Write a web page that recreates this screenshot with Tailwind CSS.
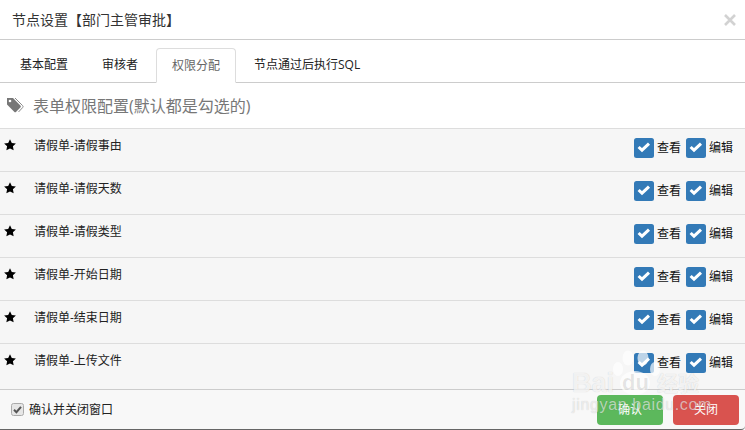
<!DOCTYPE html>
<html lang="zh"><head><meta charset="utf-8">
<script src="https://cdn.jsdelivr.net/npm/@tailwindcss/browser@4"></script>
</head>
<body class="w-[745px] h-[430px] overflow-hidden bg-white font-['Open_Sans','Noto_Sans_CJK_SC',sans-serif] text-[12px] text-[#333]">
<div class="relative w-[745px] h-[430px] flex flex-col">
  <header class="h-[40px] shrink-0 border-b border-[#ccc] flex items-center justify-between pl-[12px] pr-[9px]">
    <span class="text-[14px] leading-[20px] text-[#333]">节点设置【部门主管审批】</span>
    <svg width="12" height="12" viewBox="0 0 12 12"><path d="M1 1 L11 11 M11 1 L1 11" stroke="#d2d2d2" stroke-width="2.6"/></svg>
  </header>
  <nav class="h-[43px] shrink-0 border-b border-[#ccc] flex items-end pl-[5px] text-[12px] leading-[18px]">
    <span class="h-[34px] px-[15px] flex items-center text-[#222]">基本配置</span>
    <span class="h-[34px] pl-[19px] pr-[17px] flex items-center text-[#222]">审核者</span>
    <span class="h-[35px] w-[80px] mb-[-1px] ml-[1px] border border-[#ddd] border-b-white bg-white rounded-t-[4px] flex items-center justify-center text-[#666]">权限分配</span>
    <span class="h-[34px] px-[18px] flex items-center text-[#222]">节点通过后执行SQL</span>
  </nav>
  <h2 class="h-[45px] shrink-0 flex items-center pl-[6px] gap-[9px] text-[16px] text-[#777] font-normal">
    <svg width="18" height="17" viewBox="0 0 18 17"><path fill="none" stroke="#8a8a8a" stroke-width="1" d="M9 1l7.6 7.6a1.4 1.4 0 0 1 0 2L12.5 15"/><path fill="#777" d="M1 1h6L14.4 8.6a1.4 1.4 0 0 1 0 2l-4.2 4.2a1.4 1.4 0 0 1-2 0L1 7.4z"/><circle cx="4" cy="4" r="1.3" fill="#fff"/></svg>
    <span>表单权限配置(默认都是勾选的)</span>
  </h2>
  <ul class="flex-1 min-h-0 overflow-hidden bg-[#f6f6f6]">
    <li class="h-[43px] border-t border-[#ddd] flex items-start pl-[4px] pr-[12px] text-[#222]">
      <svg width="12" height="12" viewBox="0 0 24 24" class="mt-[10px]"><path fill="#000" d="M12 .5l3.6 7.4 8.2 1.1-6 5.6 1.5 8.1L12 18.8l-7.3 3.9 1.5-8.1-6-5.6 8.2-1.1z"/></svg>
      <span class="ml-[18px] mt-[8px] leading-[18px]">请假单-请假事由</span>
      <span class="ml-auto mt-[9px] flex items-center text-[#111]">
        <svg width="20" height="20" viewBox="0 0 20 20"><rect width="20" height="20" rx="2.5" fill="#337ab7"/><path d="M4.6 9l3.4 3.2L15 5.6" fill="none" stroke="#fff" stroke-width="3"/></svg><span class="ml-[3px] mr-[5px]">查看</span>
        <svg width="20" height="20" viewBox="0 0 20 20"><rect width="20" height="20" rx="2.5" fill="#337ab7"/><path d="M4.6 9l3.4 3.2L15 5.6" fill="none" stroke="#fff" stroke-width="3"/></svg><span class="ml-[3px]">编辑</span>
      </span>
    </li>
    <li class="h-[43px] border-t border-[#ddd] flex items-start pl-[4px] pr-[12px] text-[#222]">
      <svg width="12" height="12" viewBox="0 0 24 24" class="mt-[10px]"><path fill="#000" d="M12 .5l3.6 7.4 8.2 1.1-6 5.6 1.5 8.1L12 18.8l-7.3 3.9 1.5-8.1-6-5.6 8.2-1.1z"/></svg>
      <span class="ml-[18px] mt-[8px] leading-[18px]">请假单-请假天数</span>
      <span class="ml-auto mt-[9px] flex items-center text-[#111]">
        <svg width="20" height="20" viewBox="0 0 20 20"><rect width="20" height="20" rx="2.5" fill="#337ab7"/><path d="M4.6 9l3.4 3.2L15 5.6" fill="none" stroke="#fff" stroke-width="3"/></svg><span class="ml-[3px] mr-[5px]">查看</span>
        <svg width="20" height="20" viewBox="0 0 20 20"><rect width="20" height="20" rx="2.5" fill="#337ab7"/><path d="M4.6 9l3.4 3.2L15 5.6" fill="none" stroke="#fff" stroke-width="3"/></svg><span class="ml-[3px]">编辑</span>
      </span>
    </li>
    <li class="h-[43px] border-t border-[#ddd] flex items-start pl-[4px] pr-[12px] text-[#222]">
      <svg width="12" height="12" viewBox="0 0 24 24" class="mt-[10px]"><path fill="#000" d="M12 .5l3.6 7.4 8.2 1.1-6 5.6 1.5 8.1L12 18.8l-7.3 3.9 1.5-8.1-6-5.6 8.2-1.1z"/></svg>
      <span class="ml-[18px] mt-[8px] leading-[18px]">请假单-请假类型</span>
      <span class="ml-auto mt-[9px] flex items-center text-[#111]">
        <svg width="20" height="20" viewBox="0 0 20 20"><rect width="20" height="20" rx="2.5" fill="#337ab7"/><path d="M4.6 9l3.4 3.2L15 5.6" fill="none" stroke="#fff" stroke-width="3"/></svg><span class="ml-[3px] mr-[5px]">查看</span>
        <svg width="20" height="20" viewBox="0 0 20 20"><rect width="20" height="20" rx="2.5" fill="#337ab7"/><path d="M4.6 9l3.4 3.2L15 5.6" fill="none" stroke="#fff" stroke-width="3"/></svg><span class="ml-[3px]">编辑</span>
      </span>
    </li>
    <li class="h-[43px] border-t border-[#ddd] flex items-start pl-[4px] pr-[12px] text-[#222]">
      <svg width="12" height="12" viewBox="0 0 24 24" class="mt-[10px]"><path fill="#000" d="M12 .5l3.6 7.4 8.2 1.1-6 5.6 1.5 8.1L12 18.8l-7.3 3.9 1.5-8.1-6-5.6 8.2-1.1z"/></svg>
      <span class="ml-[18px] mt-[8px] leading-[18px]">请假单-开始日期</span>
      <span class="ml-auto mt-[9px] flex items-center text-[#111]">
        <svg width="20" height="20" viewBox="0 0 20 20"><rect width="20" height="20" rx="2.5" fill="#337ab7"/><path d="M4.6 9l3.4 3.2L15 5.6" fill="none" stroke="#fff" stroke-width="3"/></svg><span class="ml-[3px] mr-[5px]">查看</span>
        <svg width="20" height="20" viewBox="0 0 20 20"><rect width="20" height="20" rx="2.5" fill="#337ab7"/><path d="M4.6 9l3.4 3.2L15 5.6" fill="none" stroke="#fff" stroke-width="3"/></svg><span class="ml-[3px]">编辑</span>
      </span>
    </li>
    <li class="h-[43px] border-t border-[#ddd] flex items-start pl-[4px] pr-[12px] text-[#222]">
      <svg width="12" height="12" viewBox="0 0 24 24" class="mt-[10px]"><path fill="#000" d="M12 .5l3.6 7.4 8.2 1.1-6 5.6 1.5 8.1L12 18.8l-7.3 3.9 1.5-8.1-6-5.6 8.2-1.1z"/></svg>
      <span class="ml-[18px] mt-[8px] leading-[18px]">请假单-结束日期</span>
      <span class="ml-auto mt-[9px] flex items-center text-[#111]">
        <svg width="20" height="20" viewBox="0 0 20 20"><rect width="20" height="20" rx="2.5" fill="#337ab7"/><path d="M4.6 9l3.4 3.2L15 5.6" fill="none" stroke="#fff" stroke-width="3"/></svg><span class="ml-[3px] mr-[5px]">查看</span>
        <svg width="20" height="20" viewBox="0 0 20 20"><rect width="20" height="20" rx="2.5" fill="#337ab7"/><path d="M4.6 9l3.4 3.2L15 5.6" fill="none" stroke="#fff" stroke-width="3"/></svg><span class="ml-[3px]">编辑</span>
      </span>
    </li>
    <li class="h-[43px] border-t border-[#ddd] flex items-start pl-[4px] pr-[12px] text-[#222]">
      <svg width="12" height="12" viewBox="0 0 24 24" class="mt-[10px]"><path fill="#000" d="M12 .5l3.6 7.4 8.2 1.1-6 5.6 1.5 8.1L12 18.8l-7.3 3.9 1.5-8.1-6-5.6 8.2-1.1z"/></svg>
      <span class="ml-[18px] mt-[8px] leading-[18px]">请假单-上传文件</span>
      <span class="ml-auto mt-[9px] flex items-center text-[#111]">
        <svg width="20" height="20" viewBox="0 0 20 20"><rect width="20" height="20" rx="2.5" fill="#337ab7"/><path d="M4.6 9l3.4 3.2L15 5.6" fill="none" stroke="#fff" stroke-width="3"/></svg><span class="ml-[3px] mr-[5px]">查看</span>
        <svg width="20" height="20" viewBox="0 0 20 20"><rect width="20" height="20" rx="2.5" fill="#337ab7"/><path d="M4.6 9l3.4 3.2L15 5.6" fill="none" stroke="#fff" stroke-width="3"/></svg><span class="ml-[3px]">编辑</span>
      </span>
    </li>
  </ul>
  <footer class="h-[41px] shrink-0 border-t border-[#ccc] border-b border-b-[#666] rounded-br-[4px] bg-[#f8f8f8] flex items-center pl-[11px] pr-[6px]">
    <svg width="13" height="13" viewBox="0 0 13 13"><rect x="0.5" y="0.5" width="12" height="12" rx="2" fill="#e6e6e6" stroke="#aaa"/><path d="M3 6.8l2.4 2.4L10 3.8" fill="none" stroke="#555" stroke-width="2"/></svg>
    <span class="ml-[5px] text-[#222]">确认并关闭窗口</span>
    <button class="ml-auto w-[66px] h-[30px] rounded-[4px] bg-[#5cb85c] text-white text-[12px]">确认</button>
    <button class="ml-[10px] w-[66px] h-[30px] rounded-[4px] bg-[#d9534f] text-white text-[12px]">关闭</button>
  </footer>
  <!-- Baidu watermark laid over the corner of the dialog -->
  <div class="absolute left-[570px] top-[348px] w-[140px] h-[70px] pointer-events-none">
    <svg width="60" height="48" viewBox="0 0 60 48" class="absolute left-[40px] top-[0px]"><g fill="#fff" fill-opacity="0.68"><ellipse cx="8" cy="21" rx="5" ry="7"/><ellipse cx="18" cy="10" rx="5.5" ry="7.5"/><ellipse cx="33" cy="10" rx="5.5" ry="7.5"/><ellipse cx="45" cy="21" rx="5" ry="7"/><ellipse cx="25" cy="35" rx="15" ry="12"/></g></svg>
    <span class="absolute left-[2px] top-[20px] text-[27px] leading-[30px] font-bold text-white/75 [text-shadow:0_0_1px_rgba(0,0,0,0.18)] font-['Liberation_Sans',sans-serif]">Bai</span>
    <span class="absolute left-[52px] top-[22px] text-[22px] leading-[26px] font-bold text-black/10 font-['Liberation_Sans',sans-serif]">du</span>
    <span class="absolute left-[87px] top-[22px] text-[21px] leading-[26px] font-bold whitespace-nowrap text-white/75 [text-shadow:0_0_1px_rgba(0,0,0,0.18)]">经验</span>
    <span class="absolute left-[2px] top-[48px] text-[16px] leading-[18px] tracking-[0.65px] whitespace-nowrap text-white/60 [text-shadow:0_0_1px_rgba(0,0,0,0.2)] font-['Liberation_Sans',sans-serif]">jingyan.baidu.com</span>
  </div>
</div>
</body></html>
